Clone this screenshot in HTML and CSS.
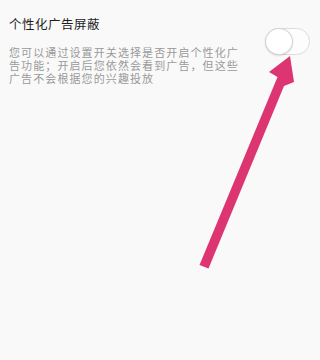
FILE: index.html
```html
<!DOCTYPE html>
<html lang="zh">
<head>
<meta charset="utf-8">
<link rel="stylesheet" href="styles.css">
</head>
<body>
<div class="page">
  <div class="row">
    <div class="text">
      <div class="title">个性化广告屏蔽</div>
      <div class="desc">您可以通过设置开关选择是否开启个性化广告功能；开启后您依然会看到广告，但这些广告不会根据您的兴趣投放</div>
    </div>
    <div class="toggle"><div class="knob"></div></div>
  </div>
</div>
<svg class="arrow" width="320" height="360" viewBox="0 0 320 360">
  <polygon points="199.5,265 208.5,268.5 284,86 294,82 290,56 269,72 277.5,77" fill="#dc3571"/>
</svg>
</body>
</html>
```
FILE: styles.css
```css
html, body {
  margin: 0;
  padding: 0;
  background: #f9f9f9;
}
body {
  width: 320px;
  height: 360px;
  overflow: hidden;
  position: relative;
  font-family: "Noto Sans CJK SC", "Noto Sans", sans-serif;
}
.page {
  padding: 16px 10px 0 9px;
}
.row {
  display: flex;
  justify-content: space-between;
  align-items: flex-start;
}
.text {
  width: 236px;
}
.title {
  font-size: 12.5px;
  line-height: 16px;
  letter-spacing: 0.5px;
  color: #1e1e1e;
}
.desc {
  margin-top: 14px;
  font-size: 11px;
  line-height: 13px;
  letter-spacing: 1.1px;
  color: #999;
  width: 234px;
}
.toggle {
  margin-top: 12px;
  width: 45px;
  height: 27px;
  box-sizing: border-box;
  border: 1px solid #dcdcdc;
  border-radius: 14px;
  background: #fdfdfd;
  position: relative;
}
.knob {
  position: absolute;
  left: -1px;
  top: -1px;
  width: 28px;
  height: 27px;
  box-sizing: border-box;
  border-radius: 50%;
  background: #fff;
  border: 1px solid #d4d4d4;
  box-shadow: 0 1px 2px rgba(0,0,0,0.12);
}
.arrow {
  position: absolute;
  left: 0;
  top: 0;
}
```
